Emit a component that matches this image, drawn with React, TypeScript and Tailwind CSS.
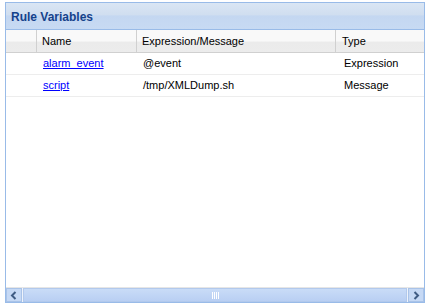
import React from 'react';

const rows = [
  { name: 'alarm_event', expr: '@event', type: 'Expression' },
  { name: 'script', expr: '/tmp/XMLDump.sh', type: 'Message' },
];

function Arrow({ dir }: { dir: 'left' | 'right' }) {
  return (
    <svg width="8" height="9" viewBox="0 0 8 9">
      {dir === 'left' ? (
        <path d="M5.5 1 L2 4.5 L5.5 8" fill="none" stroke="#3f5c84" strokeWidth="2" />
      ) : (
        <path d="M2.5 1 L6 4.5 L2.5 8" fill="none" stroke="#3f5c84" strokeWidth="2" />
      )}
    </svg>
  );
}

export default function App() {
  return (
    <div className="w-[429px] h-[305px] bg-white pt-[2px] pl-[5px] font-['Liberation_Sans',Arial,sans-serif]">
      <div className="w-[420px] h-[301px] border border-[#99bbe8] flex flex-col bg-white">
        {/* Header */}
        <div className="h-[27px] flex items-center px-[5px] pt-[1px] border-b border-[#99bbe8] bg-[linear-gradient(to_bottom,#dae6f4_0%,#d0def0_45%,#c4d7f1_50%,#c7daf3_100%)]">
          <span className="text-[12px] font-bold text-[#15428b]">Rule Variables</span>
        </div>

        {/* Column headers */}
        <div className="h-[23px] flex text-[11px] text-black border-b border-[#d0d0d0] bg-[linear-gradient(to_bottom,#f9f9f9_0%,#f9f9f9_50%,#ebebeb_55%,#ececec_100%)]">
          <div className="w-[31px] border-r border-[#d0d0d0]" />
          <div className="w-[100px] border-r border-[#d0d0d0] flex items-center pl-[5px] pt-[1px]">Name</div>
          <div className="w-[199px] border-r border-[#d0d0d0] flex items-center pl-[5px] pt-[1px]">Expression/Message</div>
          <div className="flex-1 flex items-center pl-[6px] pt-[1px]">Type</div>
        </div>

        {/* Rows */}
        <div className="flex-1 flex flex-col">
          {rows.map((r) => (
            <div key={r.name} className="h-[22px] flex items-center text-[11px] text-black border-b border-[#ededed]">
              <div className="w-[32px]" />
              <div className="w-[100px] pl-[5px]">
                <a className="text-[#0000ff] underline">{r.name}</a>
              </div>
              <div className="w-[200px] pl-[5px]">{r.expr}</div>
              <div className="flex-1 pl-[6px]">{r.type}</div>
            </div>
          ))}
        </div>

        {/* Horizontal scrollbar */}
        <div className="h-[15px] flex items-stretch bg-[#eef3fb] border-t border-[#e6e6e6]">
          <div className="w-[16px] flex items-center justify-center border border-[#a9c3e8] bg-[#c6d9f5]">
            <Arrow dir="left" />
          </div>
          <div className="flex-1 flex items-center justify-center mx-[1px] border border-[#b2c9ec] bg-[linear-gradient(to_bottom,#c9dcf7,#b9cff3)]">
            <div className="flex gap-[1px]">
              <div className="w-[1px] h-[7px] bg-white" />
              <div className="w-[1px] h-[7px] bg-white" />
              <div className="w-[1px] h-[7px] bg-white" />
              <div className="w-[1px] h-[7px] bg-white" />
            </div>
          </div>
          <div className="w-[16px] flex items-center justify-center border border-[#a9c3e8] bg-[#c6d9f5]">
            <Arrow dir="right" />
          </div>
        </div>
      </div>
    </div>
  );
}
